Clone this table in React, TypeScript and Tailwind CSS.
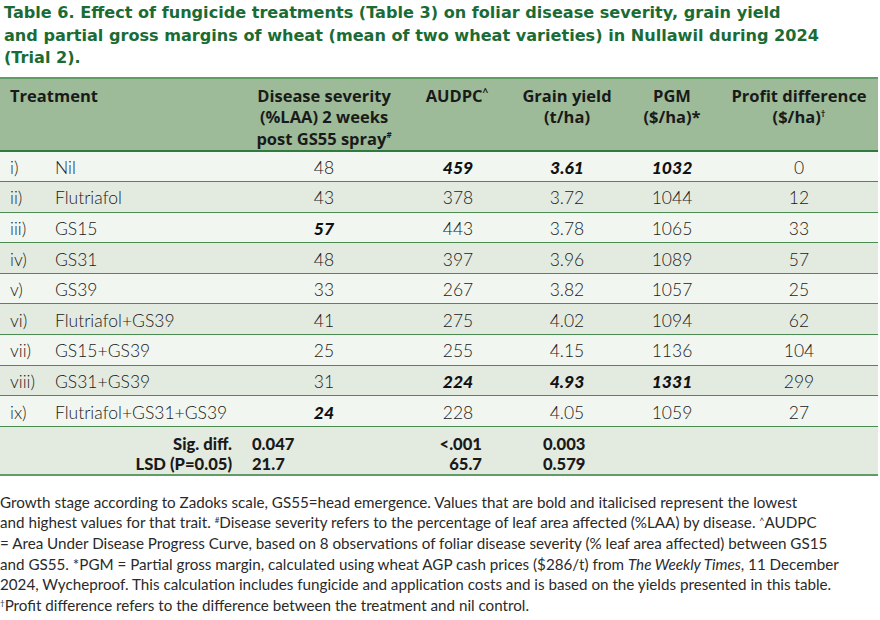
import React from "react";

type Row = {
  num: string;
  name: string;
  ds: string;
  au: string;
  gy: string;
  pgm: string;
  pd: string;
  b?: string[];
};

const rows: Row[] = [
  { num: "i)", name: "Nil", ds: "48", au: "459", gy: "3.61", pgm: "1032", pd: "0", b: ["au", "gy", "pgm"] },
  { num: "ii)", name: "Flutriafol", ds: "43", au: "378", gy: "3.72", pgm: "1044", pd: "12" },
  { num: "iii)", name: "GS15", ds: "57", au: "443", gy: "3.78", pgm: "1065", pd: "33", b: ["ds"] },
  { num: "iv)", name: "GS31", ds: "48", au: "397", gy: "3.96", pgm: "1089", pd: "57" },
  { num: "v)", name: "GS39", ds: "33", au: "267", gy: "3.82", pgm: "1057", pd: "25" },
  { num: "vi)", name: "Flutriafol+GS39", ds: "41", au: "275", gy: "4.02", pgm: "1094", pd: "62" },
  { num: "vii)", name: "GS15+GS39", ds: "25", au: "255", gy: "4.15", pgm: "1136", pd: "104" },
  { num: "viii)", name: "GS31+GS39", ds: "31", au: "224", gy: "4.93", pgm: "1331", pd: "299", b: ["au", "gy", "pgm"] },
  { num: "ix)", name: "Flutriafol+GS31+GS39", ds: "24", au: "228", gy: "4.05", pgm: "1059", pd: "27", b: ["ds"] },
];

const grid = "grid grid-cols-[250px_148px_120px_98px_112px_150px]";
const heavy = { fontFamily: "'Open Sans', Lato, sans-serif" };

function Val({ v, bold }: { v: string; bold: boolean }) {
  return (
    <div className={"text-center " + (bold ? "font-black italic text-[#111]" : "font-light")}>{v}</div>
  );
}

function Sup({ c, top = 6, size = 9 }: { c: string; top?: number; size?: number }) {
  return (
    <span
      className="inline-block leading-none align-baseline relative"
      style={{ fontSize: size, top: -top }}
    >
      {c}
    </span>
  );
}

export default function App() {
  return (
    <div
      className="w-[880px] h-[620px] bg-white overflow-hidden text-[#1a1a1a]"
      style={{ fontFamily: "Lato, 'Open Sans', sans-serif" }}
    >
      <div
        className="pt-[2px] pl-[4px] text-[16.1px] leading-[22.5px] font-bold text-[#1b6b35] whitespace-nowrap"
        style={{ fontFamily: "'DejaVu Sans', 'Open Sans', sans-serif" }}
      >
        <div>Table 6. Effect of fungicide treatments (Table 3) on foliar disease severity, grain yield</div>
        <div>and partial gross margins of wheat (mean of two wheat varieties) in Nullawil during 2024</div>
        <div>(Trial 2).</div>
      </div>

      <div className="mt-[7px] w-[878px] border-t-2 border-b-2 border-[#5f9c66]">
        {/* header */}
        <div
          className={grid + " bg-[#9dbb98] pt-[6px] h-[73px] text-[16.5px] leading-[21.5px] font-bold text-[#1a1a1a] border-b-2 border-[#2f7a3e]"}
          style={heavy}
        >
          <div className="pl-[10px]">Treatment</div>
          <div className="text-center">
            Disease severity
            <br />
            (%LAA) 2 weeks
            <br />
            post GS55 spray<Sup c="#" size={8} top={7} />
          </div>
          <div className="text-center pr-[2px]">
            AUDPC<Sup c="^" size={10} top={6} />
          </div>
          <div className="text-center">
            Grain yield
            <br />
            (t/ha)
          </div>
          <div className="text-center">
            PGM
            <br />
            ($/ha)*
          </div>
          <div className="text-center pr-[8px]">
            Profit difference
            <br />
            ($/ha)<Sup c="†" size={9} top={6} />
          </div>
        </div>

        {rows.map((r, i) => {
          const b = r.b || [];
          return (
            <div
              key={r.num}
              className={
                grid +
                " h-[30.6px] items-center pt-[3px] text-[17.5px] leading-[22px] border-b border-[#4b8c52] " +
                (i % 2 === 0 ? "bg-[#f1f6f0]" : "bg-[#e3ebe1]")
              }
            >
              <div className="flex pl-[10px] font-light">
                <div className="w-[45px]">{r.num}</div>
                <div>{r.name}</div>
              </div>
              <Val v={r.ds} bold={b.includes("ds")} />
              <Val v={r.au} bold={b.includes("au")} />
              <Val v={r.gy} bold={b.includes("gy")} />
              <Val v={r.pgm} bold={b.includes("pgm")} />
              <div className="pr-[8px]">
                <Val v={r.pd} bold={false} />
              </div>
            </div>
          );
        })}

        <div className={grid + " bg-[#e3ebe1] h-[47px] pt-[7px] text-[16.6px] leading-[20px] font-black"}>
          <div className="text-right pr-[18px]">
            Sig. diff.
            <br />
            LSD (P=0.05)
          </div>
          <div className="pl-[2px]">
            0.047
            <br />
            21.7
          </div>
          <div className="text-right pr-[36px]">
            &lt;.001
            <br />
            65.7
          </div>
          <div className="pl-[25px]">
            0.003
            <br />
            0.579
          </div>
          <div />
          <div />
        </div>
      </div>

      <div className="mt-[16px] text-[15.2px] leading-[20.6px] text-[#2a2a2a] whitespace-nowrap">
        <div>Growth stage according to Zadoks scale, GS55=head emergence. Values that are bold and italicised represent the lowest</div>
        <div>
          and highest values for that trait. <Sup c="#" size={8} top={5} />Disease severity refers to the percentage of leaf area affected (%LAA) by disease. <Sup c="^" size={9} top={4} />AUDPC
        </div>
        <div>= Area Under Disease Progress Curve, based on 8 observations of foliar disease severity (% leaf area affected) between GS15</div>
        <div>
          and GS55. *PGM = Partial gross margin, calculated using wheat AGP cash prices ($286/t) from <i>The Weekly Times</i>, 11 December
        </div>
        <div>2024, Wycheproof. This calculation includes fungicide and application costs and is based on the yields presented in this table.</div>
        <div>
          <Sup c="†" size={8} top={5} />Profit difference refers to the difference between the treatment and nil control.
        </div>
      </div>
    </div>
  );
}
